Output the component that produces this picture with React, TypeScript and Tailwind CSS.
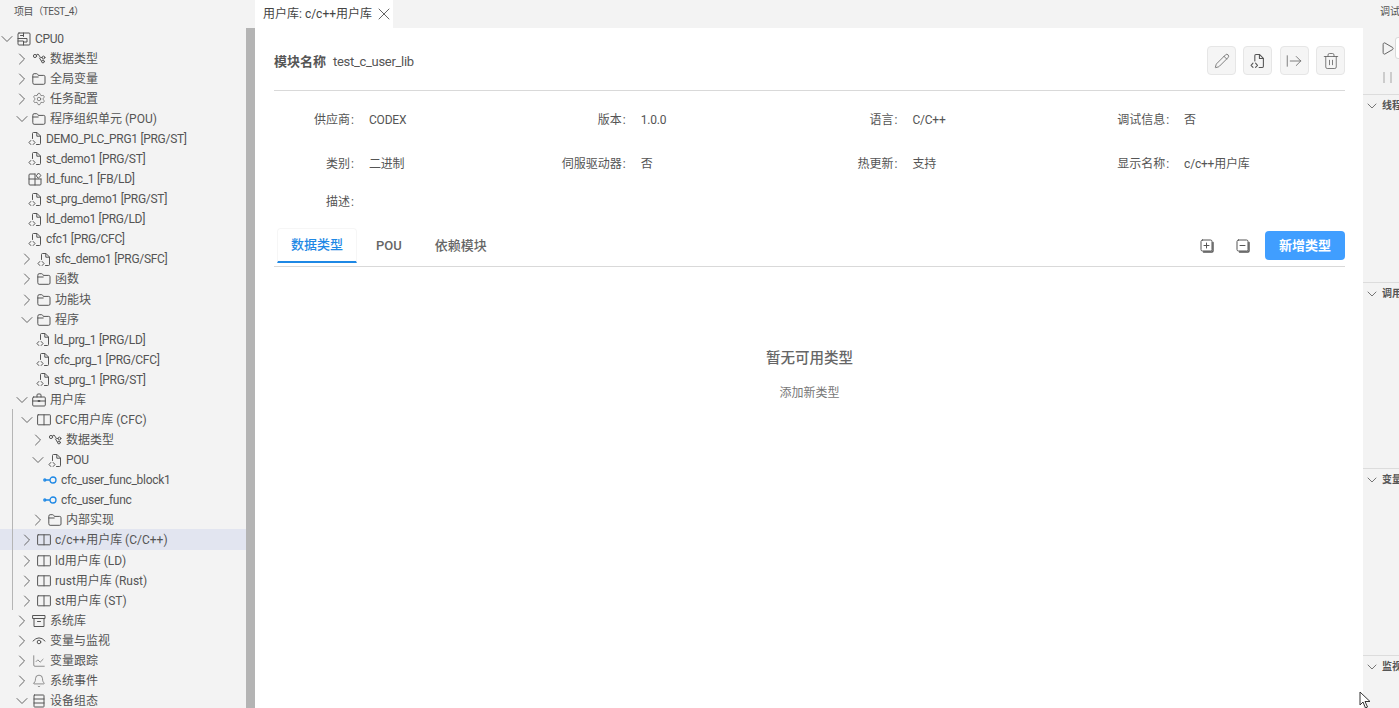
import type { ReactNode } from "react";
import { ArrowRightFromLine, Bell, ChartLine, ChevronDown, ChevronRight, Pencil, Play, Settings, Trash2, X } from "lucide-react";

const line = { fill: "none", stroke: "currentColor", strokeWidth: 1, strokeLinecap: "round", strokeLinejoin: "round" } as const;

function Svg(props: { children: ReactNode; className?: string }) {
  return (
    <svg viewBox="0 0 14 14" {...line} className={props.className ?? "w-[14px] h-[14px] shrink-0"}>
      {props.children}
    </svg>
  );
}

function FileCode({ className }: { className?: string }) {
  return (
    <Svg className={className}>
      <path d="M4.500 7V2q0-1 1-1h3.500L12.500 4.500V12q0 1-1 1H8.500" />
      <path d="M8.800 1.200V4.700H12.300" />
      <path d="M2.800 9 1 11l1.800 2M5.200 9 7 11l-1.800 2" />
    </Svg>
  );
}

function Folder() {
  return (
    <Svg>
      <path d="M.8 3q0-1.300 1.300-1.300h2.500q.8 0 1.200.8l.5.9h5.400q1.300 0 1.300 1.300v6.300q0 1.300-1.300 1.300H2.100Q.8 12.300.8 11z" />
      <path d="M.8 5h5.400" />
    </Svg>
  );
}

function Nodes() {
  return (
    <Svg>
      <circle cx="3" cy="4" r="1.600" />
      <path d="M4.500 3 6 2l2.500 3.500h1.500" />
      <circle cx="11.500" cy="5.500" r="1.400" />
      <circle cx="11" cy="9.500" r="1.400" />
      <path d="M7.500 6 9.600 9.500" />
    </Svg>
  );
}

function Cpu() {
  return (
    <Svg>
      <rect x="1" y="1" width="12" height="12" rx="1" />
      <path d="M1 6.500h5M6.500 1v3.500M3.500 3.500h3M1 9h5.500v4M6.500 6.500H10v3.500H6.500" />
    </Svg>
  );
}

function FuncBlock() {
  return (
    <Svg>
      <path d="M7 2H2q-1 0-1 1v9q0 1 1 1h10q1 0 1-1V7" />
      <path d="M1 7h12M7 2v11" />
      <path d="M8.500 3.500 10.500 1l2.500 2.500-2.500 2.500z" />
    </Svg>
  );
}

function Case() {
  return (
    <Svg>
      <rect x=".7" y="4" width="12.600" height="9" rx="1" />
      <path d="M5 4V2q0-1 1-1h2q1 0 1 1v2M.7 8h12.600" />
      <path d="M6.500 8h1" strokeWidth="1.800" />
    </Svg>
  );
}

function Book() {
  return (
    <Svg>
      <rect x=".6" y="1.800" width="12.800" height="10" rx=".6" />
      <path d="M7 1.800v10" />
    </Svg>
  );
}

function Link() {
  return (
    <Svg className="w-[14px] h-[14px] shrink-0 text-[#1e88e5]">
      <circle cx="1.800" cy="7" r="1" strokeWidth="1.300" />
      <path d="M3 7h3.500" strokeWidth="1.300" />
      <circle cx="10" cy="7" r="3" strokeWidth="1.300" />
    </Svg>
  );
}

function ArchiveBox() {
  return (
    <Svg>
      <rect x="1" y="1.500" width="12" height="3" />
      <path d="M2 4.500V12.500H12V4.500M5.500 7.500h3" />
    </Svg>
  );
}

function EyeArc() {
  return (
    <Svg>
      <path d="M1 7q6-6.500 12 0" />
      <circle cx="7" cy="8" r="1.800" />
    </Svg>
  );
}

function Rows() {
  return (
    <Svg>
      <rect x="2" y="1" width="10" height="12" rx=".6" />
      <path d="M2 5h10M2 9h10" />
    </Svg>
  );
}

function StackSquare({ minus }: { minus?: boolean }) {
  return (
    <svg viewBox="0 0 14 14" {...line} className="w-[14px] h-[14px] text-[#555]">
      <rect x="1" y="1" width="11" height="11" rx="1.500" />
      <path d="M13 3.500V12q0 1-1 1H3.500" strokeWidth="1.400" />
      <path d="M4 6.500h5" />
      {!minus && <path d="M6.500 4v5" />}
    </svg>
  );
}

type Row = { label: string; pl: string; icon: ReactNode; open?: boolean; leaf?: boolean; active?: boolean };

const file = <FileCode className="w-[14px] h-[15px] shrink-0" />;

// indents read off the screenshot, the tree is not perfectly regular
const rows: Row[] = [
  { label: "CPU0", pl: "pl-[1px]", icon: <Cpu />, open: true },
  { label: "数据类型", pl: "pl-[16px]", icon: <Nodes /> },
  { label: "全局变量", pl: "pl-[16px]", icon: <Folder /> },
  { label: "任务配置", pl: "pl-[16px]", icon: <Settings size={14} strokeWidth={1.100} className="shrink-0" /> },
  { label: "程序组织单元 (POU)", pl: "pl-[16px]", icon: <Folder />, open: true },
  { label: "DEMO_PLC_PRG1 [PRG/ST]", pl: "pl-[28px]", icon: file, leaf: true },
  { label: "st_demo1 [PRG/ST]", pl: "pl-[28px]", icon: file, leaf: true },
  { label: "ld_func_1 [FB/LD]", pl: "pl-[28px]", icon: <FuncBlock />, leaf: true },
  { label: "st_prg_demo1 [PRG/ST]", pl: "pl-[28px]", icon: file, leaf: true },
  { label: "ld_demo1 [PRG/LD]", pl: "pl-[28px]", icon: file, leaf: true },
  { label: "cfc1 [PRG/CFC]", pl: "pl-[28px]", icon: file, leaf: true },
  { label: "sfc_demo1 [PRG/SFC]", pl: "pl-[21px]", icon: file },
  { label: "函数", pl: "pl-[21px]", icon: <Folder /> },
  { label: "功能块", pl: "pl-[21px]", icon: <Folder /> },
  { label: "程序", pl: "pl-[21px]", icon: <Folder />, open: true },
  { label: "ld_prg_1 [PRG/LD]", pl: "pl-[36px]", icon: file, leaf: true },
  { label: "cfc_prg_1 [PRG/CFC]", pl: "pl-[36px]", icon: file, leaf: true },
  { label: "st_prg_1 [PRG/ST]", pl: "pl-[36px]", icon: file, leaf: true },
  { label: "用户库", pl: "pl-[16px]", icon: <Case />, open: true },
  { label: "CFC用户库 (CFC)", pl: "pl-[21px]", icon: <Book />, open: true },
  { label: "数据类型", pl: "pl-[32px]", icon: <Nodes /> },
  { label: "POU", pl: "pl-[32px]", icon: file, open: true },
  { label: "cfc_user_func_block1", pl: "pl-[43px]", icon: <Link />, leaf: true },
  { label: "cfc_user_func", pl: "pl-[43px]", icon: <Link />, leaf: true },
  { label: "内部实现", pl: "pl-[32px]", icon: <Folder /> },
  { label: "c/c++用户库 (C/C++)", pl: "pl-[21px]", icon: <Book />, active: true },
  { label: "ld用户库 (LD)", pl: "pl-[21px]", icon: <Book /> },
  { label: "rust用户库 (Rust)", pl: "pl-[21px]", icon: <Book /> },
  { label: "st用户库 (ST)", pl: "pl-[21px]", icon: <Book /> },
  { label: "系统库", pl: "pl-[16px]", icon: <ArchiveBox /> },
  { label: "变量与监视", pl: "pl-[16px]", icon: <EyeArc /> },
  { label: "变量跟踪", pl: "pl-[16px]", icon: <ChartLine size={14} strokeWidth={1.100} className="shrink-0" /> },
  { label: "系统事件", pl: "pl-[16px]", icon: <Bell size={14} strokeWidth={1.100} className="shrink-0" /> },
  { label: "设备组态", pl: "pl-[16px]", icon: <Rows />, open: true },
];

// Roboto runs a bit wider than the screenshot's font, pull plain latin labels in
const isLatin = (s: string) => !/[^\x00-\x7f]/.test(s);

function TreeRow({ row }: { row: Row }) {
  return (
    <div className={`relative h-[20.08px] pt-[2px] flex items-center text-[#555] ${row.pl} ${row.active ? "bg-[#e2e5f0]" : ""}`}>
      {!row.leaf && (
        <span className="w-3 mr-1 shrink-0 flex items-center justify-center text-[#666]">
          {row.open ? (
            <ChevronDown size={20} strokeWidth={1.200} className="shrink-0" />
          ) : (
            <ChevronRight size={20} strokeWidth={1.200} className="shrink-0" />
          )}
        </span>
      )}
      {row.icon}
      <span className={`ml-1 text-xs whitespace-nowrap ${isLatin(row.label) ? "tracking-[-0.3px]" : ""}`}>{row.label}</span>
    </div>
  );
}

function ToolButton(props: { children: ReactNode }) {
  return (
    <button className="w-[29px] h-[29px] flex items-center justify-center rounded bg-[#f5f5f5] border border-[#e6e6e6] text-[#555]">
      {props.children}
    </button>
  );
}

function Info(props: { label: string; value?: string }) {
  return (
    <div className="flex text-xs text-[#555] h-[18px]">
      <span className="w-[80px] text-right whitespace-nowrap">{props.label}<span className="pl-[1px]">:</span></span>
      <span className="ml-[15px] whitespace-nowrap tracking-[-0.2px]">{props.value}</span>
    </div>
  );
}

function Section(props: { label: string; className: string }) {
  return (
    <div className={`flex items-center gap-[2px] pl-px h-[22px] border-t border-[#dcdcdc] text-[10px] font-semibold text-[#555] whitespace-nowrap ${props.className}`}>
      <ChevronDown size={16} strokeWidth={1.200} className="shrink-0" />
      {props.label}
    </div>
  );
}

export default function App() {
  return (
    <div className="relative flex w-[1399px] h-[708px] overflow-hidden bg-[#f3f3f3] font-['Roboto','Noto_Sans_CJK_SC',sans-serif]">
      <aside className="w-[255px] shrink-0 flex flex-col">
        <div className="h-[28px] shrink-0 pt-[4px] pl-[14px] text-[10px] tracking-[-0.4px] text-[#555]">项目（TEST_4）</div>
        <div className="flex flex-1 min-h-0">
          <div className="relative flex-1 min-w-0 overflow-hidden">
            <div className="mt-[-0.54px]">
              {rows.map((r, i) => (
                <TreeRow key={i} row={r} />
              ))}
            </div>
            <div className="absolute left-[12px] top-[381px] h-[201px] w-px bg-[#b5b5b5]" />
          </div>
          <div className="w-[9px] shrink-0 bg-[#b4b4b4]" />
        </div>
      </aside>

      <main className="w-[1108px] shrink-0 flex flex-col">
        <div className="h-[28px] shrink-0 flex">
          <div className="w-[138px] bg-white flex items-center pl-2 text-xs text-[#444] whitespace-nowrap">
            用户库: c/c++用户库
            <X size={20} strokeWidth={1} className="ml-[2px] shrink-0" />
          </div>
        </div>

        <div className="flex-1 bg-white pl-[19px] pr-[18px] flex flex-col">
          <div className="h-[63px] shrink-0 flex items-center justify-between border-b border-[#d9d9d9] pt-[3px]">
            <div className="flex items-center text-[13px] text-[#555] pt-[2px]">
              <span className="font-semibold">模块名称</span>
              <span className="ml-[7px] tracking-[-0.3px]">test_c_user_lib</span>
            </div>
            <div className="flex gap-[7.300px]">
              <ToolButton><Pencil size={16} strokeWidth={1.100} /></ToolButton>
              <ToolButton><FileCode className="w-[15px] h-[16px]" /></ToolButton>
              <ToolButton><ArrowRightFromLine size={18} strokeWidth={1} /></ToolButton>
              <ToolButton><Trash2 size={18} strokeWidth={1} /></ToolButton>
            </div>
          </div>

          <div className="grid grid-cols-[repeat(4,271.700px)] grid-rows-[44px_38px_18px] pt-[21px]">
            <Info label="供应商" value="CODEX" />
            <Info label="版本" value="1.0.0" />
            <Info label="语言" value="C/C++" />
            <Info label="调试信息" value="否" />
            <Info label="类别" value="二进制" />
            <Info label="伺服驱动器" value="否" />
            <Info label="热更新" value="支持" />
            <Info label="显示名称" value="c/c++用户库" />
            <Info label="描述" />
          </div>

          <div className="mt-[16px] h-[39px] shrink-0 flex items-start border-b border-[#d9d9d9]">
            <div className="w-[80px] ml-[3px] h-[35px] flex items-center justify-center rounded-t-sm border border-[#f6f6f6] border-b-2 border-b-[#1e88e5] text-[13px] font-medium text-[#1e88e5]">
              数据类型
            </div>
            <div className="ml-[19px] h-[35px] flex items-center text-[13px] font-medium text-[#666]">POU</div>
            <div className="ml-[33px] h-[35px] flex items-center text-[13px] font-medium text-[#666]">依赖模块</div>
            <div className="ml-auto flex items-center h-[29px] mt-[3px]">
              <StackSquare />
              <div className="ml-[22px]"><StackSquare minus /></div>
              <button className="ml-[15px] w-[80px] h-[29px] rounded bg-[#409eff] text-white text-[13px] font-semibold">新增类型</button>
            </div>
          </div>

          <div className="flex flex-col items-center pt-[82px]">
            <div className="text-[14.5px] leading-5 font-medium text-[#666]">暂无可用类型</div>
            <div className="mt-[16px] text-xs text-[#777]">添加新类型</div>
          </div>
        </div>
      </main>

      <aside className="flex-1 min-w-0 overflow-hidden flex flex-col">
        <div className="h-[28px] shrink-0 pt-[4px] pl-[17px] text-[10px] text-[#555] whitespace-nowrap">调试</div>
        <div className="h-[66px] shrink-0 pl-[17px] pt-[9px]">
          <div className="flex items-center">
            <Play size={15} strokeWidth={1.300} className="shrink-0 text-[#444]" />
            <div className="w-[20px] h-[22px] shrink-0 bg-white border border-[#d9d9d9] rounded-[3px]" />
          </div>
          <div className="mt-[13px] ml-[3px] flex gap-[5px]">
            <div className="w-[2px] h-[11px] bg-[#ccc]" />
            <div className="w-[2px] h-[11px] bg-[#ccc]" />
          </div>
        </div>
        <Section label="线程" className="mb-[166px]" />
        <Section label="调用" className="mb-[164px]" />
        <Section label="变量" className="mb-[165px]" />
        <Section label="监视" className="" />
      </aside>

      <svg viewBox="0 0 14 18" className="absolute left-[1359px] top-[691px] w-[14px] h-[18px]" fill="white" stroke="#333" strokeWidth="1">
        <path d="M1 1v13l3-3 2.500 6 2-1-2.500-5.500H11z" />
      </svg>
    </div>
  );
}
